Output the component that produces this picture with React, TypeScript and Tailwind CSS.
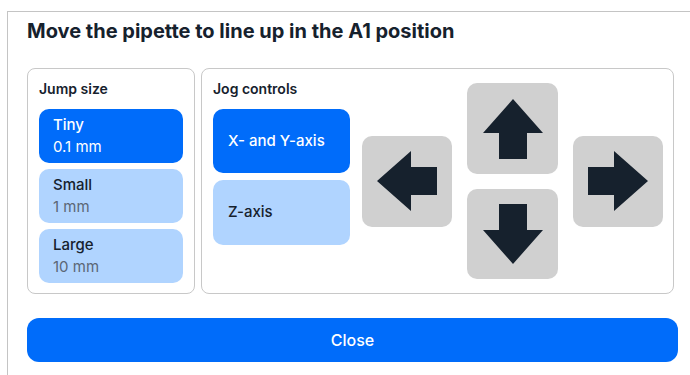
import React from "react"

const font = { fontFamily: "Inter, 'Liberation Sans', sans-serif" }

type Dir = "left" | "right" | "up" | "down"

const arrowPoints: Record<Dir, string> = {
  left: "0,30 34,0 34,16 60,16 60,44 34,44 34,60",
  right: "60,30 26,0 26,16 0,16 0,44 26,44 26,60",
  up: "30,0 60,34 44,34 44,60 16,60 16,34 0,34",
  down: "30,60 60,26 44,26 44,0 16,0 16,26 0,26",
}

function ArrowButton({ dir, className }: { dir: Dir; className?: string }) {
  return (
    <button
      className={`flex h-[91px] w-full items-center justify-center rounded-[10px] bg-[#d0d0d0] ${className ?? ""}`}
    >
      <svg width="60" height="60" viewBox="0 0 60 60">
        <polygon points={arrowPoints[dir]} fill="#16212d" />
      </svg>
    </button>
  )
}

function SizeOption({ name, value, active }: { name: string; value: string; active?: boolean }) {
  return (
    <button
      className={`flex h-[54px] w-full flex-col justify-center rounded-[10px] pl-[14px] text-left text-[15px] leading-[22px] ${
        active ? "bg-[#006cfa] text-white" : "bg-[#b0d4ff] text-[#16212d]"
      }`}
    >
      <span className="font-medium">{name}</span>
      <span className={active ? "text-white" : "text-[#5b6675]"}>{value}</span>
    </button>
  )
}

function AxisOption({ label, active, tall }: { label: string; active?: boolean; tall?: boolean }) {
  return (
    <button
      className={`flex w-full items-center rounded-[10px] pl-[15px] text-left text-[15px] font-medium ${
        tall ? "h-[65px]" : "h-[64px]"
      } ${active ? "bg-[#006cfa] text-white" : "bg-[#b0d4ff] text-[#16212d]"}`}
    >
      {label}
    </button>
  )
}

export default function App() {
  return (
    <div className="h-[375px] w-[690px] overflow-hidden bg-white text-[#16212d]" style={font}>
      <div className="ml-[7px] mt-[11px] h-[400px] w-[720px] border-l border-t border-[#c4c4c4] pl-[19px] pt-[5px]">
        <h1 className="text-[20px] font-bold leading-[28px]">Move the pipette to line up in the A1 position</h1>

        <div className="mt-[23px] flex w-[647px] gap-[6px]">
          <div className="flex h-[226px] w-[168px] flex-col rounded-[8px] border border-[#c8c8c8] px-[11px] pt-[10px]">
            <p className="text-[14px] font-semibold leading-[20px]">Jump size</p>
            <div className="mt-[10px] flex flex-col gap-[6px]">
              <SizeOption name="Tiny" value="0.1 mm" active />
              <SizeOption name="Small" value="1 mm" />
              <SizeOption name="Large" value="10 mm" />
            </div>
          </div>

          <div className="flex h-[226px] flex-1 items-center rounded-[8px] border border-[#c8c8c8] pl-[11px] pr-[10px]">
            <div className="flex h-full w-[137px] flex-col pt-[10px]">
              <p className="text-[14px] font-semibold leading-[20px]">Jog controls</p>
              <div className="mt-[10px] flex flex-col gap-[7px]">
                <AxisOption label="X- and Y-axis" active />
                <AxisOption label="Z-axis" tall />
              </div>
            </div>
            <div className="ml-[12px] grid grid-cols-[90px_91px_90px] grid-rows-[91px_90px] gap-[15px]">
              <ArrowButton dir="left" className="row-span-2 self-center" />
              <ArrowButton dir="up" />
              <ArrowButton dir="right" className="row-span-2 self-center" />
              <ArrowButton dir="down" className="col-start-2 !h-[90px]" />
            </div>
          </div>
        </div>

        <button className="mt-[24px] h-[44px] w-[651px] rounded-[12px] bg-[#006cfa] text-[16px] font-medium text-white">
          Close
        </button>
      </div>
    </div>
  )
}
